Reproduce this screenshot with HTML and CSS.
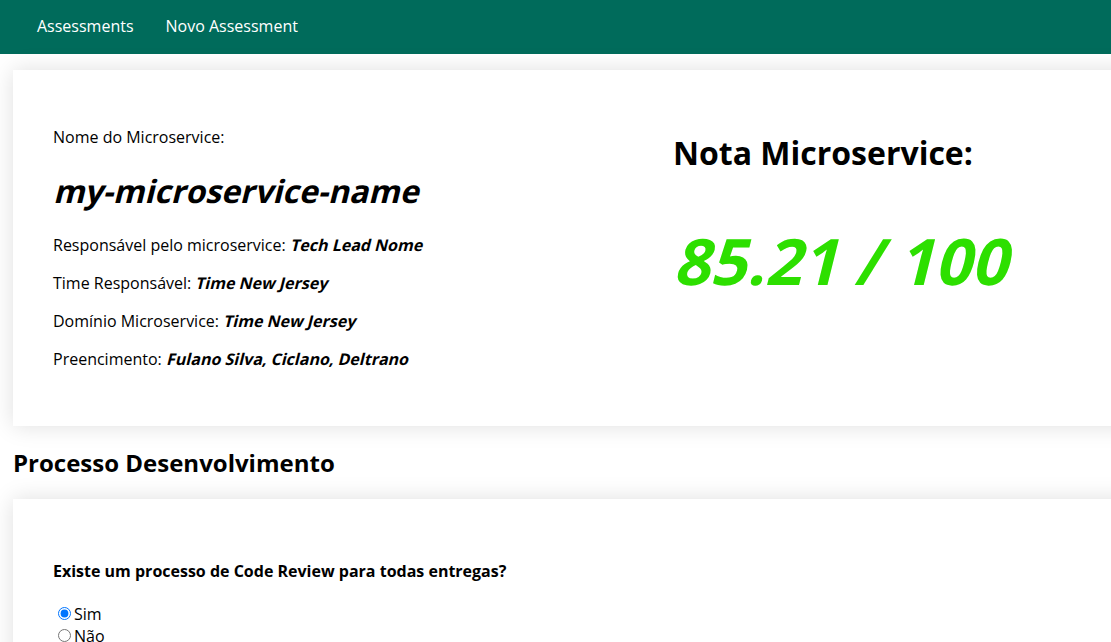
FILE: index.html
```html
<!DOCTYPE html>
<html lang="pt">
<head>
<meta charset="utf-8">
<title>Assessment</title>
<link rel="stylesheet" href="styles.css">
</head>
<body>
<nav class="navbar">
  <a class="nav-link" href="#">Assessments</a>
  <a class="nav-link" href="#">Novo Assessment</a>
</nav>
<main class="content">
  <section class="card summary">
    <div class="info">
      <p>Nome do Microservice:</p>
      <h1 class="ms-name"><span class="slant">my-microservice-name</span></h1>
      <p>Responsável pelo microservice: <strong class="val slant">Tech Lead Nome</strong></p>
      <p>Time Responsável: <strong class="val slant">Time New Jersey</strong></p>
      <p>Domínio Microservice: <strong class="val slant">Time New Jersey</strong></p>
      <p>Preencimento: <strong class="val slant">Fulano Silva, Ciclano, Deltrano</strong></p>
    </div>
    <div class="score">
      <h1 class="score-title">Nota Microservice:</h1>
      <div class="score-value"><span class="slant">85.21 / 100</span></div>
    </div>
  </section>
  <h2 class="section-title">Processo Desenvolvimento</h2>
  <section class="card questions">
    <div class="question">
      <p class="q-label">Existe um processo de Code Review para todas entregas?</p>
      <label class="option"><input type="radio" name="q1" checked>Sim</label>
      <label class="option"><input type="radio" name="q1">Não</label>
    </div>
  </section>
</main>
</body>
</html>
```
FILE: styles.css
```css
html {
  overflow-x: hidden;
}
body {
  margin: 0;
  font-family: "Open Sans", "Noto Sans", sans-serif;
  font-size: 16px;
  color: #000;
  background: #fff;
}
.navbar {
  height: 54px;
  background: #006b5b;
  display: flex;
  align-items: center;
  padding-left: 21px;
}
.nav-link {
  color: #fff;
  text-decoration: none;
  padding: 0 16px;
  line-height: 22px;
  margin-top: -2px;
}
.content {
  padding: 16px 0 0 13px;
}
.card {
  background: #fff;
  box-shadow: 0 0 22px rgba(0, 0, 0, 0.13);
  padding: 40px;
  width: 1240px;
  display: flow-root;
}
.summary {
  display: flex;
}
.info {
  width: 620px;
  flex: none;
}
.info p {
  margin: 16px 0;
}
/* synthetic oblique of the upright bold face */
.slant {
  display: inline-block;
  font-style: normal;
  transform: skewX(-14deg);
  transform-origin: 0 78%;
}
.val {
  font-weight: 700;
}
.ms-name {
  font-size: 32px;
  font-weight: 700;
  margin: 0.67em 0;
}
.score {
  flex: 1;
}
.score-title {
  font-size: 32px;
  font-weight: 700;
  margin: 0.67em 0;
}
.score-value {
  font-size: 64px;
  font-weight: 700;
  color: #2ddf00;
  margin-top: 43px;
  line-height: 1.362;
}
.section-title {
  font-size: 24px;
  font-weight: 700;
  margin: 20px 0 20px;
}
.questions {
  padding-top: 40px;
}
.question {
  padding-top: 21px;
}
.q-label {
  font-weight: 700;
  margin: 0 0 21px;
}
.option {
  display: block;
  line-height: 22px;
}
.option input {
  margin: 3px 3px 0 5px;
}
```
